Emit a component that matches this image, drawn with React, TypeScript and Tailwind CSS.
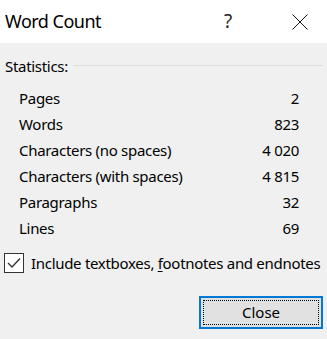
import React from "react";

const rows: [string, string][] = [
  ["Pages", "2"],
  ["Words", "823"],
  ["Characters (no spaces)", "4 020"],
  ["Characters (with spaces)", "4 815"],
  ["Paragraphs", "32"],
  ["Lines", "69"],
];

export default function App() {
  return (
    <div
      className="w-[327px] h-[339px] bg-[#f0f0f0] text-black flex flex-col overflow-hidden"
      style={{ fontFamily: '"Noto Sans", sans-serif' }}
    >
      <div className="h-[43px] bg-white flex items-center shrink-0">
        <div className="pl-[5px] text-[18px] tracking-[-0.5px] leading-none flex-1 pb-[1px]">Word Count</div>
        <div className="w-[46px] flex justify-center text-[19px] leading-none text-[#222] mr-[26px]">?</div>
        <div className="w-[46px] h-full flex items-center justify-center mr-[4px]">
          <svg width="16" height="16" viewBox="0 0 16 16">
            <path d="M0.5 0.5 L15.5 15.5 M15.5 0.5 L0.5 15.5" stroke="#111" strokeWidth="1" fill="none" />
          </svg>
        </div>
      </div>
      <div className="flex items-center pl-[5px] pr-[4px] mt-[13px] text-[15px] leading-[20px] tracking-[-0.3px]">
        <span>Statistics:</span>
        <div className="flex-1 h-px bg-[#dcdcdc] ml-[5px] mt-[-2px]" />
      </div>
      <div className="flex flex-col pl-[19px] pr-[28px] mt-[9px] text-[15px] leading-[26px] tracking-[-0.3px]">
        {rows.map(([k, v]) => (
          <div key={k} className="flex justify-between">
            <span>{k}</span>
            <span>{v}</span>
          </div>
        ))}
      </div>
      <div className="flex items-center mt-[12px] pl-[4px] text-[15px] leading-[20px] tracking-[-0.3px] whitespace-nowrap">
        <div className="w-[20px] h-[20px] border border-[#333] bg-white flex items-center justify-center shrink-0">
          <svg width="14" height="12" viewBox="0 0 14 12">
            <path d="M1 6 L5 10 L13 1.5" stroke="#333" strokeWidth="1.4" fill="none" />
          </svg>
        </div>
        <span className="ml-[7px]">
          Include textboxes, <span className="underline underline-offset-2">f</span>ootnotes and endnotes
        </span>
      </div>
      <div className="flex justify-end pr-[4px] mt-[23px]">
        <button className="w-[124px] h-[33px] border-2 border-[#0078d7] bg-[#e1e1e1] p-[2px] flex">
          <div className="flex-1 border border-dotted border-black flex items-center justify-center text-[15px] leading-none">
            Close
          </div>
        </button>
      </div>
    </div>
  );
}
